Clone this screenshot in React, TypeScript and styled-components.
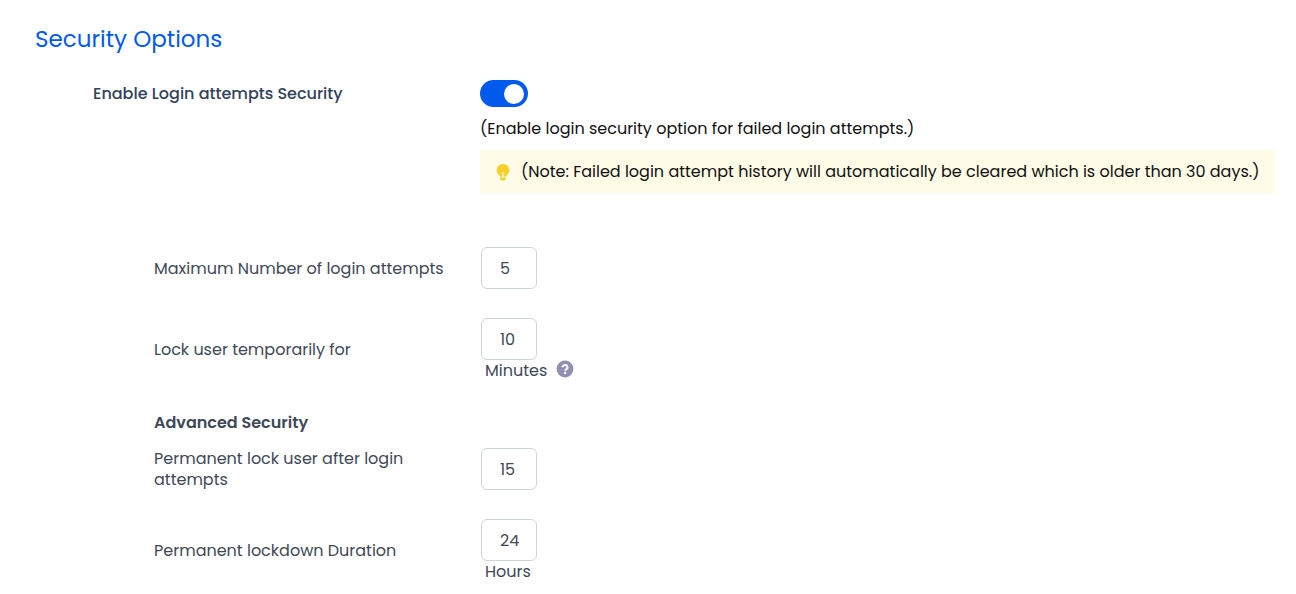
import { useState } from "react";
import styled, { createGlobalStyle } from "styled-components";

const GlobalStyle = createGlobalStyle`
  *, *::before, *::after { box-sizing: border-box; }
  body {
    margin: 0;
    background: #fff;
    color: #3e4857;
    font-family: Poppins, Inter, sans-serif;
    font-size: 16px;
    line-height: 21px;
  }
`;

const Page = styled.main`
  padding: 24px 21px 12px 35px;
`;

const Title = styled.h1`
  margin: 0 0 26px;
  color: #005aee;
  font-size: 23px;
  font-weight: 400;
  line-height: 30px;
`;

const Row = styled.div<{ $gap?: number; $nested?: boolean; $align?: string }>`
  display: grid;
  grid-template-columns: ${(p) => (p.$nested ? "326px" : "387px")} minmax(0, 1fr);
  align-items: ${(p) => p.$align ?? "center"};
  margin-bottom: ${(p) => p.$gap ?? 0}px;
`;

const Options = styled.form`
  padding-left: 58px;
`;

const Nested = styled.div`
  padding-left: 61px;
`;

const MainLabel = styled.label`
  padding-top: 3px;
  color: #32435a;
  font-weight: 500;
`;

const Label = styled.label`
  padding-right: 20px;
`;

const Switch = styled.input`
  appearance: none;
  display: block;
  width: 48px;
  height: 27px;
  margin: 0;
  padding: 4px;
  border-radius: 14px;
  background: #b4bccb;
  cursor: pointer;

  &::before {
    content: "";
    display: block;
    width: 20px;
    height: 20px;
    border-radius: 50%;
    background: #fff;
  }
  &:checked { background: #005aee; }
  &:checked::before { margin-left: 20px; }
`;

const Hint = styled.p`
  margin: 11px 0;
  color: #111;
`;

const Note = styled.div`
  display: flex;
  align-items: center;
  gap: 9px;
  padding: 11px 14px;
  background: #fefbe6;
  color: #111;
`;

const Field = styled.div`
  display: flex;
  flex-direction: column;
  align-items: flex-start;
  padding-left: 1px;
`;

const NumberBox = styled.input`
  width: 56px;
  height: 42px;
  padding: 0 8px 0 18px;
  border: 1px solid #ced4df;
  border-radius: 6px;
  background: #fff;
  color: #3e4857;
  font: inherit;
`;

const Unit = styled.span`
  display: flex;
  align-items: flex-start;
  gap: 9px;
  padding-left: 4px;
`;

const Help = styled.button`
  display: flex;
  padding: 0;
  border: 0;
  background: none;
  cursor: help;
`;

const Subtitle = styled.h2`
  margin: 0 0 15px;
  font-size: 16px;
  font-weight: 600;
  line-height: 21px;
`;

const Bulb = () => (
  <svg width="18" height="18" viewBox="0 0 18 18" aria-hidden="true">
    <path
      fill="#f4d22b"
      d="M9 1a6.3 6.3 0 0 0-3.8 11.3c.6.5.9.8 1.1 1.5h2.100v-3.300l-.9-.9.5-.5L9 10.100l1-1 .5.500-.9.9v3.300h2.100c.2-.7.5-1 1.100-1.500A6.300 6.300 0 0 0 9 1zM6.100 14.600h5.800v1c0 1.200-.8 1.800-2 1.800H8.100c-1.200 0-2-.6-2-1.800z"
    />
  </svg>
);

const Question = () => (
  <svg width="18" height="18" viewBox="0 0 18 18" aria-hidden="true">
    <circle cx="9" cy="9" r="8.400" fill="#9190b3" />
    <path d="M6.500 7.200a2.500 2.300 0 1 1 4 1.900c-1 .6-1.400.9-1.400 1.700" fill="none" stroke="#fff" strokeWidth="2" />
    <circle cx="9.100" cy="13" r="1.200" fill="#fff" />
  </svg>
);

type NumberFieldProps = {
  id: string;
  label: string;
  initial: string;
  unit?: string;
  help?: boolean;
  gap?: number;
};

const NumberField = ({ id, label, initial, unit, help, gap }: NumberFieldProps) => {
  const [value, setValue] = useState(initial);
  return (
    <Row $nested $gap={gap}>
      <Label htmlFor={id}>{label}</Label>
      <Field>
        <NumberBox id={id} inputMode="numeric" value={value} onChange={(e) => setValue(e.target.value)} />
        {unit && (
          <Unit>
            {unit}
            {help && (
              <Help type="button" aria-label="Help">
                <Question />
              </Help>
            )}
          </Unit>
        )}
      </Field>
    </Row>
  );
};

export default function App() {
  const [enabled, setEnabled] = useState(true);
  return (
    <>
      <GlobalStyle />
      <Page>
        <Title>Security Options</Title>
        <Options>
          <Row $align="start" $gap={54}>
            <MainLabel htmlFor="enable">Enable Login attempts Security</MainLabel>
            <div>
              <Switch
                id="enable"
                type="checkbox"
                role="switch"
                checked={enabled}
                onChange={(e) => setEnabled(e.target.checked)}
              />
              <Hint>(Enable login security option for failed login attempts.)</Hint>
              <Note>
                <Bulb />
                <span>(Note: Failed login attempt history will automatically be cleared which is older than 30 days.)</span>
              </Note>
            </div>
          </Row>
          <Nested>
            <NumberField id="max" label="Maximum Number of login attempts" initial="5" gap={29} />
            <NumberField id="lock" label="Lock user temporarily for" initial="10" unit="Minutes" help gap={31} />
            <Subtitle>Advanced Security</Subtitle>
            <NumberField id="permanent" label="Permanent lock user after login attempts" initial="15" gap={29} />
            <NumberField id="duration" label="Permanent lockdown Duration" initial="24" unit="Hours" />
          </Nested>
        </Options>
      </Page>
    </>
  );
}
